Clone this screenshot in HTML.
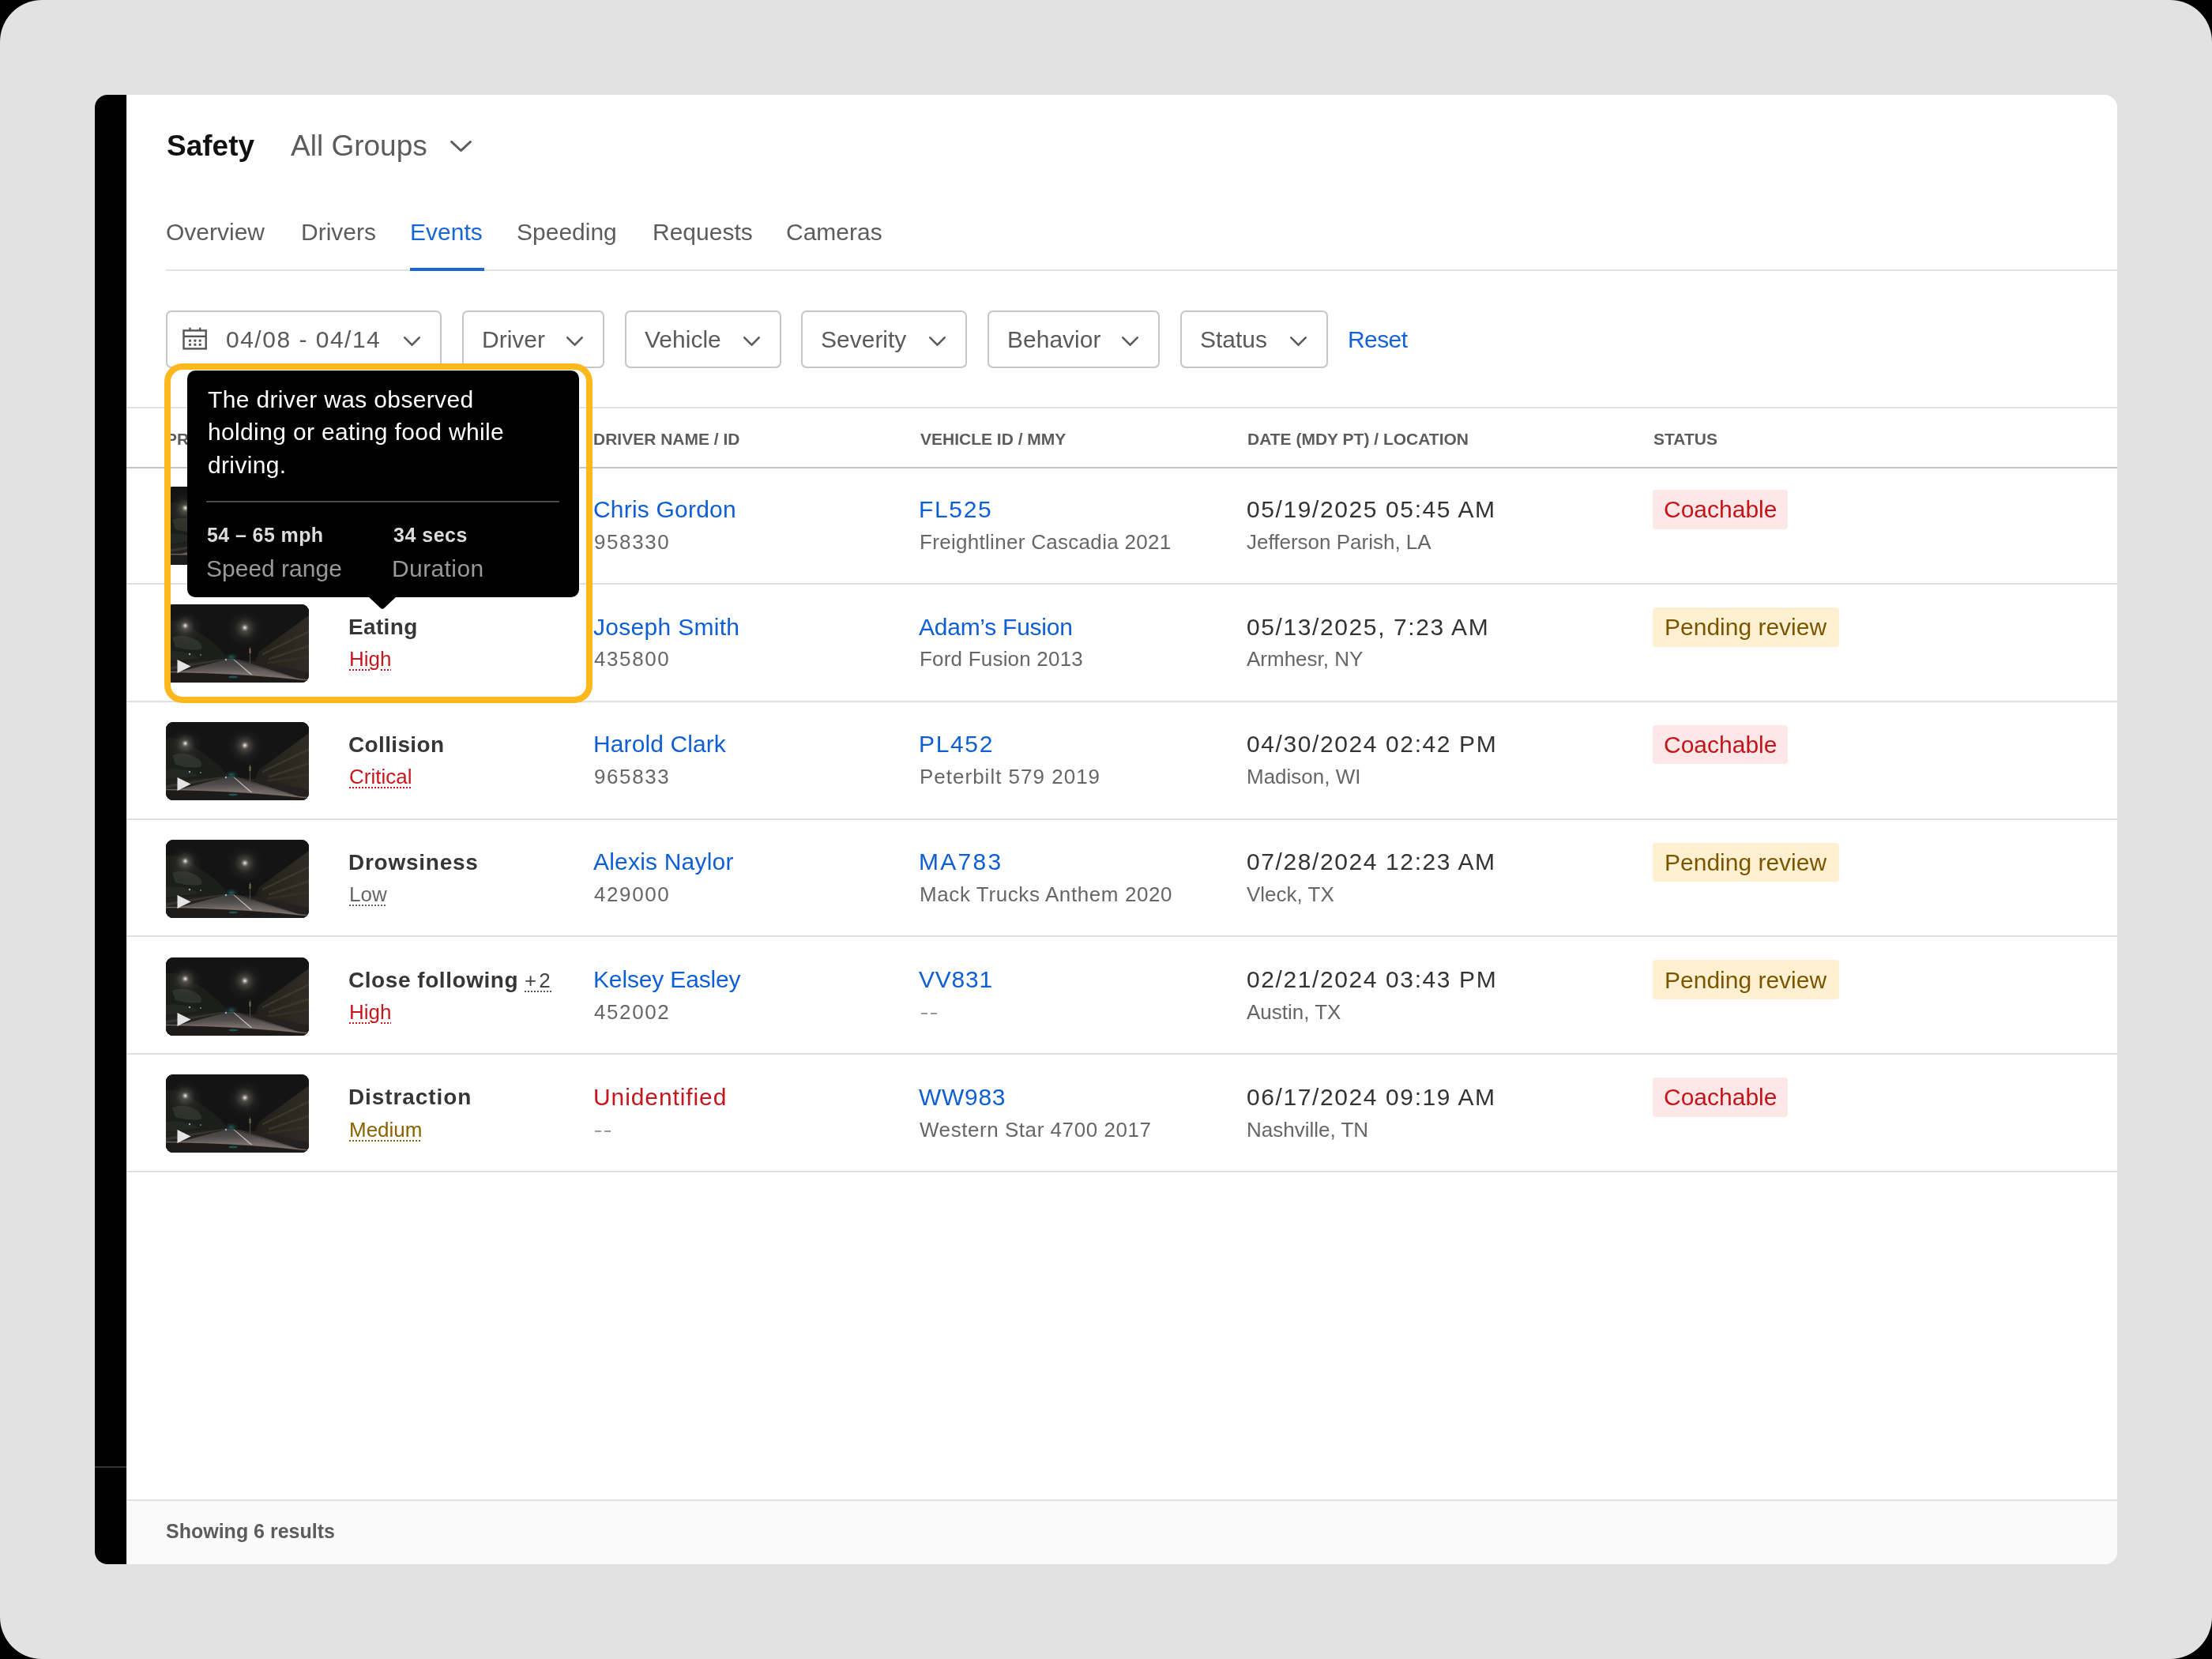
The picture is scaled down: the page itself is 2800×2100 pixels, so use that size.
<!DOCTYPE html><html><head><meta charset="utf-8"><style>
*{margin:0;padding:0;box-sizing:border-box}
html,body{width:2800px;height:2100px;overflow:hidden;background:#000}
body{font-family:"Liberation Sans",sans-serif;position:relative}
.t{position:absolute;white-space:nowrap;will-change:transform}
.a{position:absolute;display:block}
.bg{position:absolute;left:0;top:0;width:2800px;height:2100px;background:#e2e2e2;border-radius:53px}
.panel{position:absolute;left:120px;top:120px;width:2560px;height:1860px;background:#fff;border-radius:16px;overflow:hidden}
.bar{position:absolute;left:0;top:0;width:40px;height:1860px;background:#000}
.hl{position:absolute;height:2px}
.box{position:absolute;top:393px;height:73px;border:2px solid #c6c6c6;border-radius:7px;background:#fff}
.thumb{position:absolute;left:210px;width:181px;height:99px;border-radius:9px;overflow:hidden;background:#151515}
.badge{position:absolute;left:2092px;height:49.5px;border-radius:4px}
.dot{text-decoration:underline dotted;text-decoration-thickness:2px;text-underline-offset:4px;text-decoration-skip-ink:auto}
</style></head><body><div class="bg"></div>
<div class="panel"><div class="bar"></div><div class="a" style="left:40px;top:0;width:1px;height:1860px;background:#e4e4e4"></div><div class="a" style="left:0;top:1736px;width:40px;height:2px;background:#333"></div><div class="a" style="left:41px;top:1778px;width:2519px;height:82px;background:#fafafa;border-top:2px solid #e2e2e2"></div></div>
<div class="t" style="left:211.0px;top:165.7px;font-size:37px;line-height:37px;color:#111;font-weight:700;letter-spacing:0px;">Safety</div>
<div class="t" style="left:368.0px;top:165.7px;font-size:37px;line-height:37px;color:#5c5c5c;font-weight:400;letter-spacing:0px;">All Groups</div>
<svg class="a" style="left:570px;top:178px" width="27" height="14" viewBox="0 0 27 14" overflow="visible"><path d="M1.4 1.4 L13.5 12.6 L25.6 1.4" fill="none" stroke="#5c5c5c" stroke-width="2.8" stroke-linecap="round" stroke-linejoin="round"/></svg>
<div class="t" style="left:210.0px;top:279.0px;font-size:30px;line-height:30px;color:#5c5c5c;font-weight:400;letter-spacing:0px;">Overview</div>
<div class="t" style="left:381.0px;top:279.0px;font-size:30px;line-height:30px;color:#5c5c5c;font-weight:400;letter-spacing:0px;">Drivers</div>
<div class="t" style="left:519.0px;top:279.0px;font-size:30px;line-height:30px;color:#1766d6;font-weight:400;letter-spacing:0px;">Events</div>
<div class="t" style="left:654.0px;top:279.0px;font-size:30px;line-height:30px;color:#5c5c5c;font-weight:400;letter-spacing:0px;">Speeding</div>
<div class="t" style="left:825.5px;top:279.0px;font-size:30px;line-height:30px;color:#5c5c5c;font-weight:400;letter-spacing:0px;">Requests</div>
<div class="t" style="left:995.0px;top:279.0px;font-size:30px;line-height:30px;color:#5c5c5c;font-weight:400;letter-spacing:0px;">Cameras</div>
<div class="hl" style="left:210px;top:341px;width:2470px;background:#e2e2e2"></div>
<div class="hl" style="left:519px;top:339px;width:94px;height:4px;background:#1766d6"></div>
<div class="box" style="left:210px;width:349px"></div>
<svg class="a" style="left:229px;top:412px" width="36" height="34" viewBox="0 0 36 34"><rect x="3.5" y="6.4" width="28.2" height="23" fill="none" stroke="#555" stroke-width="2.4"/><line x1="3.5" y1="13.8" x2="31.7" y2="13.8" stroke="#555" stroke-width="2.4"/><line x1="11.5" y1="3.6" x2="11.5" y2="6" stroke="#555" stroke-width="2.4" stroke-linecap="round"/><line x1="24.2" y1="3.6" x2="24.2" y2="6" stroke="#555" stroke-width="2.4" stroke-linecap="round"/><rect x="10.0" y="17.7" width="3" height="3" rx="0.6" fill="#555"/><rect x="10.0" y="22.8" width="3" height="3" rx="0.6" fill="#555"/><rect x="16.4" y="17.7" width="3" height="3" rx="0.6" fill="#555"/><rect x="16.4" y="22.8" width="3" height="3" rx="0.6" fill="#555"/><rect x="22.7" y="17.7" width="3" height="3" rx="0.6" fill="#555"/><rect x="22.7" y="22.8" width="3" height="3" rx="0.6" fill="#555"/></svg>
<div class="t" style="left:286.0px;top:414.6px;font-size:30px;line-height:30px;color:#5a5a5a;font-weight:400;letter-spacing:1.5px;">04/08 - 04/14</div>
<svg class="a" style="left:511px;top:426px" width="21" height="12" viewBox="0 0 21 12" overflow="visible"><path d="M1.3 1.3 L10.5 10.7 L19.7 1.3" fill="none" stroke="#5a5a5a" stroke-width="2.6" stroke-linecap="round" stroke-linejoin="round"/></svg>
<div class="box" style="left:585px;width:180px"></div>
<div class="t" style="left:610.0px;top:414.6px;font-size:30px;line-height:30px;color:#5a5a5a;font-weight:400;letter-spacing:0px;">Driver</div>
<svg class="a" style="left:717px;top:426px" width="21" height="12" viewBox="0 0 21 12" overflow="visible"><path d="M1.3 1.3 L10.5 10.7 L19.7 1.3" fill="none" stroke="#5a5a5a" stroke-width="2.6" stroke-linecap="round" stroke-linejoin="round"/></svg>
<div class="box" style="left:791px;width:198px"></div>
<div class="t" style="left:816.0px;top:414.6px;font-size:30px;line-height:30px;color:#5a5a5a;font-weight:400;letter-spacing:0px;">Vehicle</div>
<svg class="a" style="left:941px;top:426px" width="21" height="12" viewBox="0 0 21 12" overflow="visible"><path d="M1.3 1.3 L10.5 10.7 L19.7 1.3" fill="none" stroke="#5a5a5a" stroke-width="2.6" stroke-linecap="round" stroke-linejoin="round"/></svg>
<div class="box" style="left:1014px;width:210px"></div>
<div class="t" style="left:1039.0px;top:414.6px;font-size:30px;line-height:30px;color:#5a5a5a;font-weight:400;letter-spacing:0px;">Severity</div>
<svg class="a" style="left:1176px;top:426px" width="21" height="12" viewBox="0 0 21 12" overflow="visible"><path d="M1.3 1.3 L10.5 10.7 L19.7 1.3" fill="none" stroke="#5a5a5a" stroke-width="2.6" stroke-linecap="round" stroke-linejoin="round"/></svg>
<div class="box" style="left:1250px;width:218px"></div>
<div class="t" style="left:1275.0px;top:414.6px;font-size:30px;line-height:30px;color:#5a5a5a;font-weight:400;letter-spacing:0px;">Behavior</div>
<svg class="a" style="left:1420px;top:426px" width="21" height="12" viewBox="0 0 21 12" overflow="visible"><path d="M1.3 1.3 L10.5 10.7 L19.7 1.3" fill="none" stroke="#5a5a5a" stroke-width="2.6" stroke-linecap="round" stroke-linejoin="round"/></svg>
<div class="box" style="left:1494px;width:187px"></div>
<div class="t" style="left:1519.0px;top:414.6px;font-size:30px;line-height:30px;color:#5a5a5a;font-weight:400;letter-spacing:0px;">Status</div>
<svg class="a" style="left:1633px;top:426px" width="21" height="12" viewBox="0 0 21 12" overflow="visible"><path d="M1.3 1.3 L10.5 10.7 L19.7 1.3" fill="none" stroke="#5a5a5a" stroke-width="2.6" stroke-linecap="round" stroke-linejoin="round"/></svg>
<div class="t" style="left:1706.0px;top:414.6px;font-size:30px;line-height:30px;color:#1463d6;font-weight:400;letter-spacing:-0.6px;">Reset</div>
<div class="hl" style="left:160px;top:515px;width:2520px;background:#e2e2e2"></div>
<div class="hl" style="left:160px;top:591px;width:2520px;background:#c4c4c4;box-shadow:0 2px 3px rgba(0,0,0,0.04)"></div>
<div class="t" style="left:210.0px;top:545.2px;font-size:21px;line-height:21px;color:#5c5c5c;font-weight:700;letter-spacing:0px;">PREVIEW</div>
<div class="t" style="left:751.0px;top:545.2px;font-size:21px;line-height:21px;color:#5c5c5c;font-weight:700;letter-spacing:0px;">DRIVER NAME / ID</div>
<div class="t" style="left:1165.0px;top:545.2px;font-size:21px;line-height:21px;color:#5c5c5c;font-weight:700;letter-spacing:0px;">VEHICLE ID / MMY</div>
<div class="t" style="left:1579.0px;top:545.2px;font-size:21px;line-height:21px;color:#5c5c5c;font-weight:700;letter-spacing:0px;">DATE (MDY PT) / LOCATION</div>
<div class="t" style="left:2093.0px;top:545.2px;font-size:21px;line-height:21px;color:#5c5c5c;font-weight:700;letter-spacing:0px;">STATUS</div>
<div class="hl" style="left:160px;top:738.0px;width:2520px;background:#e0e0e0"></div>
<div class="hl" style="left:160px;top:886.8px;width:2520px;background:#e0e0e0"></div>
<div class="hl" style="left:160px;top:1035.6px;width:2520px;background:#e0e0e0"></div>
<div class="hl" style="left:160px;top:1184.4px;width:2520px;background:#e0e0e0"></div>
<div class="hl" style="left:160px;top:1333.2px;width:2520px;background:#e0e0e0"></div>
<div class="hl" style="left:160px;top:1482.0px;width:2520px;background:#e0e0e0"></div>
<div class="thumb" style="top:616.4px"><svg width="181" height="99" viewBox="0 0 181 99" style="display:block">
<defs>
<radialGradient id="gl" cx="0.5" cy="0.5" r="0.5"><stop offset="0" stop-color="#fff" stop-opacity="1"/><stop offset="0.08" stop-color="#e8e4dc" stop-opacity="0.8"/><stop offset="0.35" stop-color="#8a857a" stop-opacity="0.3"/><stop offset="1" stop-color="#555" stop-opacity="0"/></radialGradient>
<radialGradient id="hz" cx="0.5" cy="0.5" r="0.5"><stop offset="0" stop-color="#6a675e" stop-opacity="0.4"/><stop offset="1" stop-color="#333" stop-opacity="0"/></radialGradient>
<radialGradient id="tl" cx="0.5" cy="0.5" r="0.5"><stop offset="0" stop-color="#2f8f88" stop-opacity="0.6"/><stop offset="1" stop-color="#1a4040" stop-opacity="0"/></radialGradient>
<linearGradient id="rd" x1="0" y1="0" x2="0" y2="1"><stop offset="0" stop-color="#3c3a3a"/><stop offset="0.5" stop-color="#5c5655"/><stop offset="1" stop-color="#857772"/></linearGradient><radialGradient id="rl" cx="0.5" cy="1" r="0.6"><stop offset="0" stop-color="#b0a5a0" stop-opacity="0.45"/><stop offset="1" stop-color="#777" stop-opacity="0"/></radialGradient>
<linearGradient id="bd" x1="0" y1="0" x2="1" y2="0"><stop offset="0" stop-color="#221f1a"/><stop offset="1" stop-color="#302c25"/></linearGradient>
</defs>
<rect width="181" height="99" fill="#141414"/>
<path d="M0 20 Q18 18 36 32 Q56 44 70 58 L80 70 L0 78 Z" fill="#1c1e1a"/>
<path d="M8 42 Q24 36 40 46 Q48 52 44 57 Q28 59 12 54 Z" fill="#33362e" opacity="0.85"/>
<path d="M0 60 Q14 58 32 62 L42 68 L0 73 Z" fill="#262824" opacity="0.9"/>
<circle cx="24.5" cy="30" r="22" fill="url(#hz)"/>
<circle cx="100" cy="31" r="24" fill="url(#hz)"/>
<path d="M118 60 L181 14 L181 92 L112 74 Z" fill="url(#bd)"/>
<path d="M122 62 L181 33 L181 36 L122 64.5 Z" fill="#453f30" opacity="0.7"/>
<path d="M130 68 L181 51 L181 54 L130 71 Z" fill="#453f30" opacity="0.6"/>
<path d="M128 73 L181 65 L181 68 L128 76 Z" fill="#3a3529" opacity="0.6"/>
<path d="M0 74 L80 69 L112 72 L181 86 L181 99 L0 99 Z" fill="#232220"/>
<path d="M0 80 L72 69 L79 69 L0 84 Z" fill="#3a3a37" opacity="0.8"/>
<path d="M79 69 L84 69 L181 99 L0 90 Z" fill="url(#rd)"/>
<path d="M80 69 L84 69 L150 92 L20 90 Z" fill="url(#rl)"/>
<path d="M85 69.5 L86.3 69.5 L113 92 L110.5 92 Z" fill="#c4bfba"/>
<path d="M89 69.8 L90.5 69.8 L178 97 L174 97 Z" fill="#8a847d" opacity="0.55"/>
<path d="M0 85.5 Q90 86 181 96 L181 99 L0 99 Z" fill="#1c1b1a"/>
<path d="M0 85.5 Q90 86 181 96" fill="none" stroke="#85746c" stroke-width="1.6" opacity="0.75"/>
<rect x="106" y="54" width="0.8" height="21" fill="#5a5a5a"/>
<rect x="105.2" y="56" width="2.6" height="6" fill="#8c7c50" opacity="0.6"/>
<circle cx="24.5" cy="27" r="13" fill="url(#gl)"/>
<circle cx="100" cy="29.5" r="14" fill="url(#gl)"/>
<ellipse cx="83" cy="67" rx="9" ry="6" fill="url(#tl)"/>
<circle cx="76" cy="70" r="1.2" fill="#d8d8ff" opacity="0.7"/>
<circle cx="30" cy="63" r="1.2" fill="#cfcfff" opacity="0.7"/>
<circle cx="44" cy="64" r="1" fill="#ddd" opacity="0.5"/>
<ellipse cx="85" cy="92" rx="6" ry="1.5" fill="#2a8a88" opacity="0.5"/>
<path class="play" opacity="0" d="M14.5 70 L31.5 78.5 L14.5 87 Z" fill="#e4e4e4"/>
</svg>
</div>
<div class="t" style="left:751.0px;top:629.7px;font-size:30px;line-height:30px;color:#0d5fd3;font-weight:400;letter-spacing:0.2px;">Chris Gordon</div>
<div class="t" style="left:752.0px;top:672.6px;font-size:26px;line-height:26px;color:#666;font-weight:400;letter-spacing:1.6px;">958330</div>
<div class="t" style="left:1163.0px;top:629.7px;font-size:30px;line-height:30px;color:#0d5fd3;font-weight:400;letter-spacing:1.65px;">FL525</div>
<div class="t" style="left:1164.0px;top:672.6px;font-size:26px;line-height:26px;color:#666;font-weight:400;letter-spacing:0.3px;">Freightliner Cascadia 2021</div>
<div class="t" style="left:1578.0px;top:629.7px;font-size:30px;line-height:30px;color:#333;font-weight:400;letter-spacing:1.6px;">05/19/2025 05:45 AM</div>
<div class="t" style="left:1578.0px;top:672.6px;font-size:26px;line-height:26px;color:#666;font-weight:400;letter-spacing:0.0px;">Jefferson Parish, LA</div>
<div class="badge" style="top:620.2px;width:171px;background:#fde7e7"></div>
<div class="t" style="left:2106.0px;top:630.4px;font-size:30px;line-height:30px;color:#c4141a;font-weight:400;letter-spacing:0px;">Coachable</div>
<div class="thumb" style="top:765.2px"><svg width="181" height="99" viewBox="0 0 181 99" style="display:block">
<defs>
<radialGradient id="gl" cx="0.5" cy="0.5" r="0.5"><stop offset="0" stop-color="#fff" stop-opacity="1"/><stop offset="0.08" stop-color="#e8e4dc" stop-opacity="0.8"/><stop offset="0.35" stop-color="#8a857a" stop-opacity="0.3"/><stop offset="1" stop-color="#555" stop-opacity="0"/></radialGradient>
<radialGradient id="hz" cx="0.5" cy="0.5" r="0.5"><stop offset="0" stop-color="#6a675e" stop-opacity="0.4"/><stop offset="1" stop-color="#333" stop-opacity="0"/></radialGradient>
<radialGradient id="tl" cx="0.5" cy="0.5" r="0.5"><stop offset="0" stop-color="#2f8f88" stop-opacity="0.6"/><stop offset="1" stop-color="#1a4040" stop-opacity="0"/></radialGradient>
<linearGradient id="rd" x1="0" y1="0" x2="0" y2="1"><stop offset="0" stop-color="#3c3a3a"/><stop offset="0.5" stop-color="#5c5655"/><stop offset="1" stop-color="#857772"/></linearGradient><radialGradient id="rl" cx="0.5" cy="1" r="0.6"><stop offset="0" stop-color="#b0a5a0" stop-opacity="0.45"/><stop offset="1" stop-color="#777" stop-opacity="0"/></radialGradient>
<linearGradient id="bd" x1="0" y1="0" x2="1" y2="0"><stop offset="0" stop-color="#221f1a"/><stop offset="1" stop-color="#302c25"/></linearGradient>
</defs>
<rect width="181" height="99" fill="#141414"/>
<path d="M0 20 Q18 18 36 32 Q56 44 70 58 L80 70 L0 78 Z" fill="#1c1e1a"/>
<path d="M8 42 Q24 36 40 46 Q48 52 44 57 Q28 59 12 54 Z" fill="#33362e" opacity="0.85"/>
<path d="M0 60 Q14 58 32 62 L42 68 L0 73 Z" fill="#262824" opacity="0.9"/>
<circle cx="24.5" cy="30" r="22" fill="url(#hz)"/>
<circle cx="100" cy="31" r="24" fill="url(#hz)"/>
<path d="M118 60 L181 14 L181 92 L112 74 Z" fill="url(#bd)"/>
<path d="M122 62 L181 33 L181 36 L122 64.5 Z" fill="#453f30" opacity="0.7"/>
<path d="M130 68 L181 51 L181 54 L130 71 Z" fill="#453f30" opacity="0.6"/>
<path d="M128 73 L181 65 L181 68 L128 76 Z" fill="#3a3529" opacity="0.6"/>
<path d="M0 74 L80 69 L112 72 L181 86 L181 99 L0 99 Z" fill="#232220"/>
<path d="M0 80 L72 69 L79 69 L0 84 Z" fill="#3a3a37" opacity="0.8"/>
<path d="M79 69 L84 69 L181 99 L0 90 Z" fill="url(#rd)"/>
<path d="M80 69 L84 69 L150 92 L20 90 Z" fill="url(#rl)"/>
<path d="M85 69.5 L86.3 69.5 L113 92 L110.5 92 Z" fill="#c4bfba"/>
<path d="M89 69.8 L90.5 69.8 L178 97 L174 97 Z" fill="#8a847d" opacity="0.55"/>
<path d="M0 85.5 Q90 86 181 96 L181 99 L0 99 Z" fill="#1c1b1a"/>
<path d="M0 85.5 Q90 86 181 96" fill="none" stroke="#85746c" stroke-width="1.6" opacity="0.75"/>
<rect x="106" y="54" width="0.8" height="21" fill="#5a5a5a"/>
<rect x="105.2" y="56" width="2.6" height="6" fill="#8c7c50" opacity="0.6"/>
<circle cx="24.5" cy="27" r="13" fill="url(#gl)"/>
<circle cx="100" cy="29.5" r="14" fill="url(#gl)"/>
<ellipse cx="83" cy="67" rx="9" ry="6" fill="url(#tl)"/>
<circle cx="76" cy="70" r="1.2" fill="#d8d8ff" opacity="0.7"/>
<circle cx="30" cy="63" r="1.2" fill="#cfcfff" opacity="0.7"/>
<circle cx="44" cy="64" r="1" fill="#ddd" opacity="0.5"/>
<ellipse cx="85" cy="92" rx="6" ry="1.5" fill="#2a8a88" opacity="0.5"/>
<path class="play" d="M14.5 70 L31.5 78.5 L14.5 87 Z" fill="#e4e4e4"/>
</svg>
</div>
<div class="t" style="left:441.0px;top:780.2px;font-size:28px;line-height:28px;color:#363636;font-weight:700;letter-spacing:0.35px;">Eating</div>
<div class="t" style="left:442.0px;top:821.4px;font-size:26px;line-height:26px;color:#c8161d;font-weight:400;letter-spacing:0px;"><span class="dot" style="text-decoration-color:#c8161d">High</span></div>
<div class="t" style="left:751.0px;top:778.5px;font-size:30px;line-height:30px;color:#0d5fd3;font-weight:400;letter-spacing:0.3px;">Joseph Smith</div>
<div class="t" style="left:752.0px;top:821.4px;font-size:26px;line-height:26px;color:#666;font-weight:400;letter-spacing:1.6px;">435800</div>
<div class="t" style="left:1163.0px;top:778.5px;font-size:30px;line-height:30px;color:#0d5fd3;font-weight:400;letter-spacing:-0.25px;">Adam’s Fusion</div>
<div class="t" style="left:1164.0px;top:821.4px;font-size:26px;line-height:26px;color:#666;font-weight:400;letter-spacing:0.2px;">Ford Fusion 2013</div>
<div class="t" style="left:1578.0px;top:778.5px;font-size:30px;line-height:30px;color:#333;font-weight:400;letter-spacing:1.6px;">05/13/2025, 7:23 AM</div>
<div class="t" style="left:1578.0px;top:821.4px;font-size:26px;line-height:26px;color:#666;font-weight:400;letter-spacing:0.0px;">Armhesr, NY</div>
<div class="badge" style="top:769.0px;width:236px;background:#fff0d2"></div>
<div class="t" style="left:2107.0px;top:779.2px;font-size:30px;line-height:30px;color:#7a5500;font-weight:400;letter-spacing:0px;">Pending review</div>
<div class="thumb" style="top:914.0px"><svg width="181" height="99" viewBox="0 0 181 99" style="display:block">
<defs>
<radialGradient id="gl" cx="0.5" cy="0.5" r="0.5"><stop offset="0" stop-color="#fff" stop-opacity="1"/><stop offset="0.08" stop-color="#e8e4dc" stop-opacity="0.8"/><stop offset="0.35" stop-color="#8a857a" stop-opacity="0.3"/><stop offset="1" stop-color="#555" stop-opacity="0"/></radialGradient>
<radialGradient id="hz" cx="0.5" cy="0.5" r="0.5"><stop offset="0" stop-color="#6a675e" stop-opacity="0.4"/><stop offset="1" stop-color="#333" stop-opacity="0"/></radialGradient>
<radialGradient id="tl" cx="0.5" cy="0.5" r="0.5"><stop offset="0" stop-color="#2f8f88" stop-opacity="0.6"/><stop offset="1" stop-color="#1a4040" stop-opacity="0"/></radialGradient>
<linearGradient id="rd" x1="0" y1="0" x2="0" y2="1"><stop offset="0" stop-color="#3c3a3a"/><stop offset="0.5" stop-color="#5c5655"/><stop offset="1" stop-color="#857772"/></linearGradient><radialGradient id="rl" cx="0.5" cy="1" r="0.6"><stop offset="0" stop-color="#b0a5a0" stop-opacity="0.45"/><stop offset="1" stop-color="#777" stop-opacity="0"/></radialGradient>
<linearGradient id="bd" x1="0" y1="0" x2="1" y2="0"><stop offset="0" stop-color="#221f1a"/><stop offset="1" stop-color="#302c25"/></linearGradient>
</defs>
<rect width="181" height="99" fill="#141414"/>
<path d="M0 20 Q18 18 36 32 Q56 44 70 58 L80 70 L0 78 Z" fill="#1c1e1a"/>
<path d="M8 42 Q24 36 40 46 Q48 52 44 57 Q28 59 12 54 Z" fill="#33362e" opacity="0.85"/>
<path d="M0 60 Q14 58 32 62 L42 68 L0 73 Z" fill="#262824" opacity="0.9"/>
<circle cx="24.5" cy="30" r="22" fill="url(#hz)"/>
<circle cx="100" cy="31" r="24" fill="url(#hz)"/>
<path d="M118 60 L181 14 L181 92 L112 74 Z" fill="url(#bd)"/>
<path d="M122 62 L181 33 L181 36 L122 64.5 Z" fill="#453f30" opacity="0.7"/>
<path d="M130 68 L181 51 L181 54 L130 71 Z" fill="#453f30" opacity="0.6"/>
<path d="M128 73 L181 65 L181 68 L128 76 Z" fill="#3a3529" opacity="0.6"/>
<path d="M0 74 L80 69 L112 72 L181 86 L181 99 L0 99 Z" fill="#232220"/>
<path d="M0 80 L72 69 L79 69 L0 84 Z" fill="#3a3a37" opacity="0.8"/>
<path d="M79 69 L84 69 L181 99 L0 90 Z" fill="url(#rd)"/>
<path d="M80 69 L84 69 L150 92 L20 90 Z" fill="url(#rl)"/>
<path d="M85 69.5 L86.3 69.5 L113 92 L110.5 92 Z" fill="#c4bfba"/>
<path d="M89 69.8 L90.5 69.8 L178 97 L174 97 Z" fill="#8a847d" opacity="0.55"/>
<path d="M0 85.5 Q90 86 181 96 L181 99 L0 99 Z" fill="#1c1b1a"/>
<path d="M0 85.5 Q90 86 181 96" fill="none" stroke="#85746c" stroke-width="1.6" opacity="0.75"/>
<rect x="106" y="54" width="0.8" height="21" fill="#5a5a5a"/>
<rect x="105.2" y="56" width="2.6" height="6" fill="#8c7c50" opacity="0.6"/>
<circle cx="24.5" cy="27" r="13" fill="url(#gl)"/>
<circle cx="100" cy="29.5" r="14" fill="url(#gl)"/>
<ellipse cx="83" cy="67" rx="9" ry="6" fill="url(#tl)"/>
<circle cx="76" cy="70" r="1.2" fill="#d8d8ff" opacity="0.7"/>
<circle cx="30" cy="63" r="1.2" fill="#cfcfff" opacity="0.7"/>
<circle cx="44" cy="64" r="1" fill="#ddd" opacity="0.5"/>
<ellipse cx="85" cy="92" rx="6" ry="1.5" fill="#2a8a88" opacity="0.5"/>
<path class="play" d="M14.5 70 L31.5 78.5 L14.5 87 Z" fill="#e4e4e4"/>
</svg>
</div>
<div class="t" style="left:441.0px;top:929.0px;font-size:28px;line-height:28px;color:#363636;font-weight:700;letter-spacing:0.35px;">Collision</div>
<div class="t" style="left:442.0px;top:970.2px;font-size:26px;line-height:26px;color:#c8161d;font-weight:400;letter-spacing:0px;"><span class="dot" style="text-decoration-color:#c8161d">Critical</span></div>
<div class="t" style="left:751.0px;top:927.3px;font-size:30px;line-height:30px;color:#0d5fd3;font-weight:400;letter-spacing:0.1px;">Harold Clark</div>
<div class="t" style="left:752.0px;top:970.2px;font-size:26px;line-height:26px;color:#666;font-weight:400;letter-spacing:1.6px;">965833</div>
<div class="t" style="left:1163.0px;top:927.3px;font-size:30px;line-height:30px;color:#0d5fd3;font-weight:400;letter-spacing:1.65px;">PL452</div>
<div class="t" style="left:1164.0px;top:970.2px;font-size:26px;line-height:26px;color:#666;font-weight:400;letter-spacing:1.0px;">Peterbilt 579 2019</div>
<div class="t" style="left:1578.0px;top:927.3px;font-size:30px;line-height:30px;color:#333;font-weight:400;letter-spacing:1.6px;">04/30/2024 02:42 PM</div>
<div class="t" style="left:1578.0px;top:970.2px;font-size:26px;line-height:26px;color:#666;font-weight:400;letter-spacing:0.0px;">Madison, WI</div>
<div class="badge" style="top:917.8px;width:171px;background:#fde7e7"></div>
<div class="t" style="left:2106.0px;top:928.0px;font-size:30px;line-height:30px;color:#c4141a;font-weight:400;letter-spacing:0px;">Coachable</div>
<div class="thumb" style="top:1062.8px"><svg width="181" height="99" viewBox="0 0 181 99" style="display:block">
<defs>
<radialGradient id="gl" cx="0.5" cy="0.5" r="0.5"><stop offset="0" stop-color="#fff" stop-opacity="1"/><stop offset="0.08" stop-color="#e8e4dc" stop-opacity="0.8"/><stop offset="0.35" stop-color="#8a857a" stop-opacity="0.3"/><stop offset="1" stop-color="#555" stop-opacity="0"/></radialGradient>
<radialGradient id="hz" cx="0.5" cy="0.5" r="0.5"><stop offset="0" stop-color="#6a675e" stop-opacity="0.4"/><stop offset="1" stop-color="#333" stop-opacity="0"/></radialGradient>
<radialGradient id="tl" cx="0.5" cy="0.5" r="0.5"><stop offset="0" stop-color="#2f8f88" stop-opacity="0.6"/><stop offset="1" stop-color="#1a4040" stop-opacity="0"/></radialGradient>
<linearGradient id="rd" x1="0" y1="0" x2="0" y2="1"><stop offset="0" stop-color="#3c3a3a"/><stop offset="0.5" stop-color="#5c5655"/><stop offset="1" stop-color="#857772"/></linearGradient><radialGradient id="rl" cx="0.5" cy="1" r="0.6"><stop offset="0" stop-color="#b0a5a0" stop-opacity="0.45"/><stop offset="1" stop-color="#777" stop-opacity="0"/></radialGradient>
<linearGradient id="bd" x1="0" y1="0" x2="1" y2="0"><stop offset="0" stop-color="#221f1a"/><stop offset="1" stop-color="#302c25"/></linearGradient>
</defs>
<rect width="181" height="99" fill="#141414"/>
<path d="M0 20 Q18 18 36 32 Q56 44 70 58 L80 70 L0 78 Z" fill="#1c1e1a"/>
<path d="M8 42 Q24 36 40 46 Q48 52 44 57 Q28 59 12 54 Z" fill="#33362e" opacity="0.85"/>
<path d="M0 60 Q14 58 32 62 L42 68 L0 73 Z" fill="#262824" opacity="0.9"/>
<circle cx="24.5" cy="30" r="22" fill="url(#hz)"/>
<circle cx="100" cy="31" r="24" fill="url(#hz)"/>
<path d="M118 60 L181 14 L181 92 L112 74 Z" fill="url(#bd)"/>
<path d="M122 62 L181 33 L181 36 L122 64.5 Z" fill="#453f30" opacity="0.7"/>
<path d="M130 68 L181 51 L181 54 L130 71 Z" fill="#453f30" opacity="0.6"/>
<path d="M128 73 L181 65 L181 68 L128 76 Z" fill="#3a3529" opacity="0.6"/>
<path d="M0 74 L80 69 L112 72 L181 86 L181 99 L0 99 Z" fill="#232220"/>
<path d="M0 80 L72 69 L79 69 L0 84 Z" fill="#3a3a37" opacity="0.8"/>
<path d="M79 69 L84 69 L181 99 L0 90 Z" fill="url(#rd)"/>
<path d="M80 69 L84 69 L150 92 L20 90 Z" fill="url(#rl)"/>
<path d="M85 69.5 L86.3 69.5 L113 92 L110.5 92 Z" fill="#c4bfba"/>
<path d="M89 69.8 L90.5 69.8 L178 97 L174 97 Z" fill="#8a847d" opacity="0.55"/>
<path d="M0 85.5 Q90 86 181 96 L181 99 L0 99 Z" fill="#1c1b1a"/>
<path d="M0 85.5 Q90 86 181 96" fill="none" stroke="#85746c" stroke-width="1.6" opacity="0.75"/>
<rect x="106" y="54" width="0.8" height="21" fill="#5a5a5a"/>
<rect x="105.2" y="56" width="2.6" height="6" fill="#8c7c50" opacity="0.6"/>
<circle cx="24.5" cy="27" r="13" fill="url(#gl)"/>
<circle cx="100" cy="29.5" r="14" fill="url(#gl)"/>
<ellipse cx="83" cy="67" rx="9" ry="6" fill="url(#tl)"/>
<circle cx="76" cy="70" r="1.2" fill="#d8d8ff" opacity="0.7"/>
<circle cx="30" cy="63" r="1.2" fill="#cfcfff" opacity="0.7"/>
<circle cx="44" cy="64" r="1" fill="#ddd" opacity="0.5"/>
<ellipse cx="85" cy="92" rx="6" ry="1.5" fill="#2a8a88" opacity="0.5"/>
<path class="play" d="M14.5 70 L31.5 78.5 L14.5 87 Z" fill="#e4e4e4"/>
</svg>
</div>
<div class="t" style="left:441.0px;top:1077.8px;font-size:28px;line-height:28px;color:#363636;font-weight:700;letter-spacing:0.75px;">Drowsiness</div>
<div class="t" style="left:442.0px;top:1119.0px;font-size:26px;line-height:26px;color:#666;font-weight:400;letter-spacing:0px;"><span class="dot" style="text-decoration-color:#666">Low</span></div>
<div class="t" style="left:751.0px;top:1076.1px;font-size:30px;line-height:30px;color:#0d5fd3;font-weight:400;letter-spacing:0.2px;">Alexis Naylor</div>
<div class="t" style="left:752.0px;top:1119.0px;font-size:26px;line-height:26px;color:#666;font-weight:400;letter-spacing:1.6px;">429000</div>
<div class="t" style="left:1163.0px;top:1076.1px;font-size:30px;line-height:30px;color:#0d5fd3;font-weight:400;letter-spacing:2.3px;">MA783</div>
<div class="t" style="left:1164.0px;top:1119.0px;font-size:26px;line-height:26px;color:#666;font-weight:400;letter-spacing:0.6px;">Mack Trucks Anthem 2020</div>
<div class="t" style="left:1578.0px;top:1076.1px;font-size:30px;line-height:30px;color:#333;font-weight:400;letter-spacing:1.6px;">07/28/2024 12:23 AM</div>
<div class="t" style="left:1578.0px;top:1119.0px;font-size:26px;line-height:26px;color:#666;font-weight:400;letter-spacing:0.0px;">Vleck, TX</div>
<div class="badge" style="top:1066.6px;width:236px;background:#fff0d2"></div>
<div class="t" style="left:2107.0px;top:1076.8px;font-size:30px;line-height:30px;color:#7a5500;font-weight:400;letter-spacing:0px;">Pending review</div>
<div class="thumb" style="top:1211.6px"><svg width="181" height="99" viewBox="0 0 181 99" style="display:block">
<defs>
<radialGradient id="gl" cx="0.5" cy="0.5" r="0.5"><stop offset="0" stop-color="#fff" stop-opacity="1"/><stop offset="0.08" stop-color="#e8e4dc" stop-opacity="0.8"/><stop offset="0.35" stop-color="#8a857a" stop-opacity="0.3"/><stop offset="1" stop-color="#555" stop-opacity="0"/></radialGradient>
<radialGradient id="hz" cx="0.5" cy="0.5" r="0.5"><stop offset="0" stop-color="#6a675e" stop-opacity="0.4"/><stop offset="1" stop-color="#333" stop-opacity="0"/></radialGradient>
<radialGradient id="tl" cx="0.5" cy="0.5" r="0.5"><stop offset="0" stop-color="#2f8f88" stop-opacity="0.6"/><stop offset="1" stop-color="#1a4040" stop-opacity="0"/></radialGradient>
<linearGradient id="rd" x1="0" y1="0" x2="0" y2="1"><stop offset="0" stop-color="#3c3a3a"/><stop offset="0.5" stop-color="#5c5655"/><stop offset="1" stop-color="#857772"/></linearGradient><radialGradient id="rl" cx="0.5" cy="1" r="0.6"><stop offset="0" stop-color="#b0a5a0" stop-opacity="0.45"/><stop offset="1" stop-color="#777" stop-opacity="0"/></radialGradient>
<linearGradient id="bd" x1="0" y1="0" x2="1" y2="0"><stop offset="0" stop-color="#221f1a"/><stop offset="1" stop-color="#302c25"/></linearGradient>
</defs>
<rect width="181" height="99" fill="#141414"/>
<path d="M0 20 Q18 18 36 32 Q56 44 70 58 L80 70 L0 78 Z" fill="#1c1e1a"/>
<path d="M8 42 Q24 36 40 46 Q48 52 44 57 Q28 59 12 54 Z" fill="#33362e" opacity="0.85"/>
<path d="M0 60 Q14 58 32 62 L42 68 L0 73 Z" fill="#262824" opacity="0.9"/>
<circle cx="24.5" cy="30" r="22" fill="url(#hz)"/>
<circle cx="100" cy="31" r="24" fill="url(#hz)"/>
<path d="M118 60 L181 14 L181 92 L112 74 Z" fill="url(#bd)"/>
<path d="M122 62 L181 33 L181 36 L122 64.5 Z" fill="#453f30" opacity="0.7"/>
<path d="M130 68 L181 51 L181 54 L130 71 Z" fill="#453f30" opacity="0.6"/>
<path d="M128 73 L181 65 L181 68 L128 76 Z" fill="#3a3529" opacity="0.6"/>
<path d="M0 74 L80 69 L112 72 L181 86 L181 99 L0 99 Z" fill="#232220"/>
<path d="M0 80 L72 69 L79 69 L0 84 Z" fill="#3a3a37" opacity="0.8"/>
<path d="M79 69 L84 69 L181 99 L0 90 Z" fill="url(#rd)"/>
<path d="M80 69 L84 69 L150 92 L20 90 Z" fill="url(#rl)"/>
<path d="M85 69.5 L86.3 69.5 L113 92 L110.5 92 Z" fill="#c4bfba"/>
<path d="M89 69.8 L90.5 69.8 L178 97 L174 97 Z" fill="#8a847d" opacity="0.55"/>
<path d="M0 85.5 Q90 86 181 96 L181 99 L0 99 Z" fill="#1c1b1a"/>
<path d="M0 85.5 Q90 86 181 96" fill="none" stroke="#85746c" stroke-width="1.6" opacity="0.75"/>
<rect x="106" y="54" width="0.8" height="21" fill="#5a5a5a"/>
<rect x="105.2" y="56" width="2.6" height="6" fill="#8c7c50" opacity="0.6"/>
<circle cx="24.5" cy="27" r="13" fill="url(#gl)"/>
<circle cx="100" cy="29.5" r="14" fill="url(#gl)"/>
<ellipse cx="83" cy="67" rx="9" ry="6" fill="url(#tl)"/>
<circle cx="76" cy="70" r="1.2" fill="#d8d8ff" opacity="0.7"/>
<circle cx="30" cy="63" r="1.2" fill="#cfcfff" opacity="0.7"/>
<circle cx="44" cy="64" r="1" fill="#ddd" opacity="0.5"/>
<ellipse cx="85" cy="92" rx="6" ry="1.5" fill="#2a8a88" opacity="0.5"/>
<path class="play" d="M14.5 70 L31.5 78.5 L14.5 87 Z" fill="#e4e4e4"/>
</svg>
</div>
<div class="t" style="left:441.0px;top:1226.6px;font-size:28px;line-height:28px;color:#363636;font-weight:700;letter-spacing:0.55px;">Close following</div>
<div class="t" style="left:664.0px;top:1228.3px;font-size:26px;line-height:26px;color:#444;font-weight:400;letter-spacing:3px;"><span class="dot" style="text-decoration-color:#555">+2</span></div>
<div class="t" style="left:442.0px;top:1267.8px;font-size:26px;line-height:26px;color:#c8161d;font-weight:400;letter-spacing:0px;"><span class="dot" style="text-decoration-color:#c8161d">High</span></div>
<div class="t" style="left:751.0px;top:1224.9px;font-size:30px;line-height:30px;color:#0d5fd3;font-weight:400;letter-spacing:-0.15px;">Kelsey Easley</div>
<div class="t" style="left:752.0px;top:1267.8px;font-size:26px;line-height:26px;color:#666;font-weight:400;letter-spacing:1.6px;">452002</div>
<div class="t" style="left:1163.0px;top:1224.9px;font-size:30px;line-height:30px;color:#0d5fd3;font-weight:400;letter-spacing:0.8px;">VV831</div>
<div class="a" style="left:1165.5px;top:1282.0px;width:8px;height:2.2px;background:#9a9a9a"></div><div class="a" style="left:1177.5px;top:1282.0px;width:8px;height:2.2px;background:#9a9a9a"></div>
<div class="t" style="left:1578.0px;top:1224.9px;font-size:30px;line-height:30px;color:#333;font-weight:400;letter-spacing:1.6px;">02/21/2024 03:43 PM</div>
<div class="t" style="left:1578.0px;top:1267.8px;font-size:26px;line-height:26px;color:#666;font-weight:400;letter-spacing:0.0px;">Austin, TX</div>
<div class="badge" style="top:1215.4px;width:236px;background:#fff0d2"></div>
<div class="t" style="left:2107.0px;top:1225.6px;font-size:30px;line-height:30px;color:#7a5500;font-weight:400;letter-spacing:0px;">Pending review</div>
<div class="thumb" style="top:1360.4px"><svg width="181" height="99" viewBox="0 0 181 99" style="display:block">
<defs>
<radialGradient id="gl" cx="0.5" cy="0.5" r="0.5"><stop offset="0" stop-color="#fff" stop-opacity="1"/><stop offset="0.08" stop-color="#e8e4dc" stop-opacity="0.8"/><stop offset="0.35" stop-color="#8a857a" stop-opacity="0.3"/><stop offset="1" stop-color="#555" stop-opacity="0"/></radialGradient>
<radialGradient id="hz" cx="0.5" cy="0.5" r="0.5"><stop offset="0" stop-color="#6a675e" stop-opacity="0.4"/><stop offset="1" stop-color="#333" stop-opacity="0"/></radialGradient>
<radialGradient id="tl" cx="0.5" cy="0.5" r="0.5"><stop offset="0" stop-color="#2f8f88" stop-opacity="0.6"/><stop offset="1" stop-color="#1a4040" stop-opacity="0"/></radialGradient>
<linearGradient id="rd" x1="0" y1="0" x2="0" y2="1"><stop offset="0" stop-color="#3c3a3a"/><stop offset="0.5" stop-color="#5c5655"/><stop offset="1" stop-color="#857772"/></linearGradient><radialGradient id="rl" cx="0.5" cy="1" r="0.6"><stop offset="0" stop-color="#b0a5a0" stop-opacity="0.45"/><stop offset="1" stop-color="#777" stop-opacity="0"/></radialGradient>
<linearGradient id="bd" x1="0" y1="0" x2="1" y2="0"><stop offset="0" stop-color="#221f1a"/><stop offset="1" stop-color="#302c25"/></linearGradient>
</defs>
<rect width="181" height="99" fill="#141414"/>
<path d="M0 20 Q18 18 36 32 Q56 44 70 58 L80 70 L0 78 Z" fill="#1c1e1a"/>
<path d="M8 42 Q24 36 40 46 Q48 52 44 57 Q28 59 12 54 Z" fill="#33362e" opacity="0.85"/>
<path d="M0 60 Q14 58 32 62 L42 68 L0 73 Z" fill="#262824" opacity="0.9"/>
<circle cx="24.5" cy="30" r="22" fill="url(#hz)"/>
<circle cx="100" cy="31" r="24" fill="url(#hz)"/>
<path d="M118 60 L181 14 L181 92 L112 74 Z" fill="url(#bd)"/>
<path d="M122 62 L181 33 L181 36 L122 64.5 Z" fill="#453f30" opacity="0.7"/>
<path d="M130 68 L181 51 L181 54 L130 71 Z" fill="#453f30" opacity="0.6"/>
<path d="M128 73 L181 65 L181 68 L128 76 Z" fill="#3a3529" opacity="0.6"/>
<path d="M0 74 L80 69 L112 72 L181 86 L181 99 L0 99 Z" fill="#232220"/>
<path d="M0 80 L72 69 L79 69 L0 84 Z" fill="#3a3a37" opacity="0.8"/>
<path d="M79 69 L84 69 L181 99 L0 90 Z" fill="url(#rd)"/>
<path d="M80 69 L84 69 L150 92 L20 90 Z" fill="url(#rl)"/>
<path d="M85 69.5 L86.3 69.5 L113 92 L110.5 92 Z" fill="#c4bfba"/>
<path d="M89 69.8 L90.5 69.8 L178 97 L174 97 Z" fill="#8a847d" opacity="0.55"/>
<path d="M0 85.5 Q90 86 181 96 L181 99 L0 99 Z" fill="#1c1b1a"/>
<path d="M0 85.5 Q90 86 181 96" fill="none" stroke="#85746c" stroke-width="1.6" opacity="0.75"/>
<rect x="106" y="54" width="0.8" height="21" fill="#5a5a5a"/>
<rect x="105.2" y="56" width="2.6" height="6" fill="#8c7c50" opacity="0.6"/>
<circle cx="24.5" cy="27" r="13" fill="url(#gl)"/>
<circle cx="100" cy="29.5" r="14" fill="url(#gl)"/>
<ellipse cx="83" cy="67" rx="9" ry="6" fill="url(#tl)"/>
<circle cx="76" cy="70" r="1.2" fill="#d8d8ff" opacity="0.7"/>
<circle cx="30" cy="63" r="1.2" fill="#cfcfff" opacity="0.7"/>
<circle cx="44" cy="64" r="1" fill="#ddd" opacity="0.5"/>
<ellipse cx="85" cy="92" rx="6" ry="1.5" fill="#2a8a88" opacity="0.5"/>
<path class="play" d="M14.5 70 L31.5 78.5 L14.5 87 Z" fill="#e4e4e4"/>
</svg>
</div>
<div class="t" style="left:441.0px;top:1375.4px;font-size:28px;line-height:28px;color:#363636;font-weight:700;letter-spacing:0.9px;">Distraction</div>
<div class="t" style="left:442.0px;top:1416.6px;font-size:26px;line-height:26px;color:#8a6300;font-weight:400;letter-spacing:0px;"><span class="dot" style="text-decoration-color:#8a6300">Medium</span></div>
<div class="t" style="left:751.0px;top:1373.7px;font-size:30px;line-height:30px;color:#c4161c;font-weight:400;letter-spacing:0.9px;">Unidentified</div>
<div class="a" style="left:752.5px;top:1430.8px;width:8px;height:2.2px;background:#9a9a9a"></div><div class="a" style="left:764.5px;top:1430.8px;width:8px;height:2.2px;background:#9a9a9a"></div>
<div class="t" style="left:1163.0px;top:1373.7px;font-size:30px;line-height:30px;color:#0d5fd3;font-weight:400;letter-spacing:0.7px;">WW983</div>
<div class="t" style="left:1164.0px;top:1416.6px;font-size:26px;line-height:26px;color:#666;font-weight:400;letter-spacing:0.55px;">Western Star 4700 2017</div>
<div class="t" style="left:1578.0px;top:1373.7px;font-size:30px;line-height:30px;color:#333;font-weight:400;letter-spacing:1.6px;">06/17/2024 09:19 AM</div>
<div class="t" style="left:1578.0px;top:1416.6px;font-size:26px;line-height:26px;color:#666;font-weight:400;letter-spacing:0.0px;">Nashville, TN</div>
<div class="badge" style="top:1364.2px;width:171px;background:#fde7e7"></div>
<div class="t" style="left:2106.0px;top:1374.4px;font-size:30px;line-height:30px;color:#c4141a;font-weight:400;letter-spacing:0px;">Coachable</div>
<div class="t" style="left:210.4px;top:1926.0px;font-size:25px;line-height:25px;color:#5c5c5c;font-weight:700;letter-spacing:0px;">Showing 6 results</div>
<div class="a" style="left:208px;top:460px;width:542px;height:430px;border:8px solid #fdb81e;border-radius:23px"></div>
<div class="a" style="left:237px;top:469px;width:496px;height:287px;background:#000;border-radius:10px"></div>
<svg class="a" style="left:466px;top:755px" width="36" height="18" viewBox="0 0 36 18"><path d="M0 0 L15.5 14.5 Q18 17 20.5 14.5 L36 0 Z" fill="#000"/></svg>
<div class="t" style="left:263.0px;top:491.1px;font-size:30px;line-height:30px;color:#fff;font-weight:400;letter-spacing:0.35px;">The driver was observed</div>
<div class="t" style="left:263.0px;top:532.1px;font-size:30px;line-height:30px;color:#fff;font-weight:400;letter-spacing:0.35px;">holding or eating food while</div>
<div class="t" style="left:263.0px;top:573.6px;font-size:30px;line-height:30px;color:#fff;font-weight:400;letter-spacing:0.35px;">driving.</div>
<div class="hl" style="left:261px;top:634px;width:447px;background:#4a4a4a"></div>
<div class="t" style="left:262.0px;top:664.8px;font-size:25px;line-height:25px;color:#dcdcdc;font-weight:700;letter-spacing:0.4px;">54 – 65 mph</div>
<div class="t" style="left:498.0px;top:664.8px;font-size:25px;line-height:25px;color:#dcdcdc;font-weight:700;letter-spacing:0.5px;">34 secs</div>
<div class="t" style="left:261.0px;top:704.6px;font-size:30px;line-height:30px;color:#999;font-weight:400;letter-spacing:0px;">Speed range</div>
<div class="t" style="left:496.0px;top:704.6px;font-size:30px;line-height:30px;color:#999;font-weight:400;letter-spacing:0.4px;">Duration</div></body></html>
